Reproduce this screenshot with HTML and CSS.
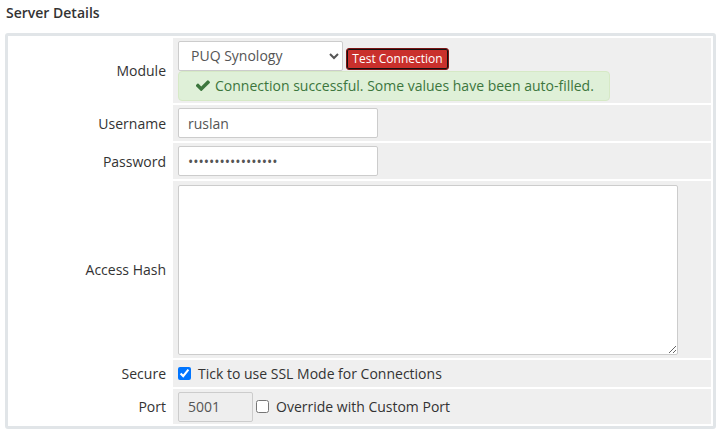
FILE: index.html
```html
<!DOCTYPE html>
<html>
<head>
<meta charset="utf-8">
<link rel="stylesheet" href="styles.css">
</head>
<body>
<div class="page">
  <h2 class="title">Server Details</h2>
  <div class="box">
    <table class="form">
      <colgroup><col class="c-label"><col class="c-field"></colgroup>
      <tr class="r-module">
        <td class="label">Module</td>
        <td class="field">
          <div class="module-line">
            <select class="select"><option>PUQ Synology</option></select>
            <button class="btn-test">Test Connection</button>
          </div>
          <div class="alert">
            <svg class="check" viewBox="142 326 1529 1168" aria-hidden="true"><path fill="#3c763d" d="M1671 566q0 40-28 68l-724 724-136 136q-28 28-68 28t-68-28l-136-136-362-362q-28-28-28-68t28-68l136-136q28-28 68-28t68 28l294 295 656-657q28-28 68-28t68 28l136 136q28 28 28 68z"/></svg>
            <span>Connection successful. Some values have been auto-filled.</span>
          </div>
        </td>
      </tr>
      <tr class="r-input">
        <td class="label">Username</td>
        <td class="field"><input class="input w200" type="text" value="ruslan"></td>
      </tr>
      <tr class="r-input">
        <td class="label">Password</td>
        <td class="field"><input class="input w200" type="password" value="abcdefghijklmnopq"></td>
      </tr>
      <tr class="r-hash">
        <td class="label">Access Hash</td>
        <td class="field"><textarea class="textarea"></textarea></td>
      </tr>
      <tr class="r-secure">
        <td class="label">Secure</td>
        <td class="field"><label class="chk"><input type="checkbox" checked> Tick to use SSL Mode for Connections</label></td>
      </tr>
      <tr class="r-port">
        <td class="label">Port</td>
        <td class="field"><div class="port-line"><input class="input w75" type="text" value="5001" disabled><label class="chk"><input type="checkbox"> Override with Custom Port</label></div></td>
      </tr>
    </table>
  </div>
</div>
</body>
</html>
```
FILE: styles.css
```css
html, body {
  margin: 0;
  padding: 0;
  background: #fff;
}
body {
  font-family: "Open Sans", "Liberation Sans", sans-serif;
  font-size: 14px;
  color: #333;
}
.page {
  padding: 0 7px 0 5px;
}
.title {
  margin: 0 0 10px 1px;
  padding-top: 3px;
  font-size: 14px;
  line-height: 20px;
  font-weight: 600;
  color: #333;
}
.box {
  border: 3px solid #e1e5e8;
  border-radius: 3px;
}
.form {
  width: 100%;
  border-spacing: 2px;
  table-layout: fixed;
}
.c-label { width: 161px; }
.label {
  text-align: right;
  padding: 0 5px 0 0;
  vertical-align: middle;
  white-space: nowrap;
}
.field {
  background: #efefef;
  padding: 0 5px;
  vertical-align: middle;
}
.r-module .field { height: 65px; }
.r-input .field { height: 36px; }
.r-hash .field { height: 177px; }
.r-secure .field { height: 27px; }
.r-port .field { height: 35px; }

.module-line {
  display: flex;
  align-items: center;
}
.select {
  width: 165px;
  height: 30px;
  box-sizing: border-box;
  border: 1px solid #ccc;
  border-radius: 2px;
  background: #fff;
  color: #555;
  font-family: inherit;
  font-size: 14px;
  padding: 0 6px 0 8px;
}
.btn-test {
  margin: 6px 0 0 3px;
  height: 22px;
  width: 103px;
  box-sizing: border-box;
  padding: 0;
  border: 1px solid #7a1414;
  border-radius: 3px;
  background: #c9302c;
  box-shadow: inset 0 0 0 1px #111;
  color: #fff;
  font-family: inherit;
  font-size: 12px;
  line-height: 18px;
}
.alert {
  display: flex;
  align-items: center;
  width: 432px;
  height: 30px;
  box-sizing: border-box;
  background: #dff0d8;
  border: 1px solid #d6e9c6;
  border-radius: 4px;
  color: #3c763d;
  padding-left: 17px;
}
.check {
  width: 14px;
  height: 11px;
  margin-right: 5px;
}
.input {
  height: 30px;
  box-sizing: border-box;
  border: 1px solid #ccc;
  border-radius: 2px;
  background: #fff;
  color: #555;
  font-family: inherit;
  font-size: 14px;
  padding: 0 9px;
  margin: 0;
}
.input:disabled {
  background: #eee;
  color: #555;
}
.w200 { width: 200px; }
.w75 { width: 75px; }
.textarea {
  display: block;
  width: 500px;
  height: 170px;
  box-sizing: border-box;
  border: 1px solid #ccc;
  border-radius: 2px;
  background: #fff;
  margin: 0;
  font-family: inherit;
}
.chk {
  display: inline-flex;
  align-items: center;
  color: #333;
}
.chk input {
  width: 13px;
  height: 13px;
  margin: 0 7px 0 0;
}
.port-line {
  display: flex;
  align-items: center;
}
.port-line .chk { margin-left: 3px; }
```
